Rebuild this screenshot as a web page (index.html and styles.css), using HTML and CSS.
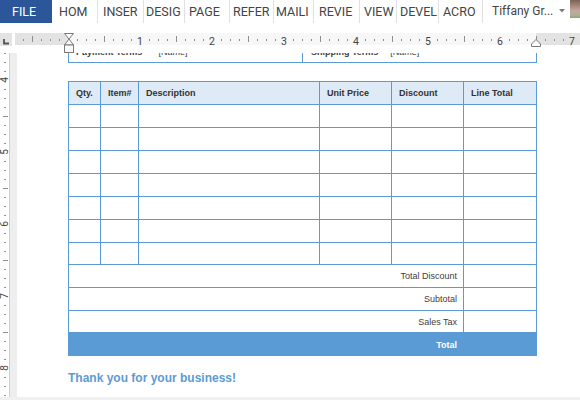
FILE: index.html
```html
<!DOCTYPE html>
<html>
<head>
<meta charset="utf-8">
<link rel="stylesheet" href="styles.css">
</head>
<body>
<div class="app">
  <div class="ribbon">
    <div class="tab file">FILE</div>
    <div class="tab t-hom">HOM</div>
    <div class="tab t-ins">INSER</div>
    <div class="tab t-des">DESIG</div>
    <div class="tab t-pag">PAGE</div>
    <div class="tab t-ref">REFER</div>
    <div class="tab t-mai">MAILI</div>
    <div class="tab t-rev">REVIE</div>
    <div class="tab t-vie">VIEW</div>
    <div class="tab t-dev">DEVEL</div>
    <div class="tab t-acr">ACRO</div>
    <div class="user">
      <span class="uname">Tiffany Gr...</span>
      <svg class="caret" width="6" height="4" viewBox="0 0 6 4"><path d="M0 0H6L3 3.5Z" fill="#7a7a7a"/></svg>
      <span class="avatar"></span>
    </div>
  </div>

  <div class="ruler-row">
    <div class="tabsel">
      <svg width="12" height="13" viewBox="0 0 12 13"><path d="M4 6V10.5H9" fill="none" stroke="#555" stroke-width="1.8"/></svg>
    </div>
    <svg class="hruler" width="565" height="20" viewBox="0 0 565 20">
      <defs>
        <pattern id="htk" x="53" y="0" width="72" height="12" patternUnits="userSpaceOnUse">
          <rect x="9" y="6" width="1" height="2" fill="#8f8f8f"/>
          <rect x="18" y="6" width="1" height="2" fill="#8f8f8f"/>
          <rect x="27" y="6" width="1" height="2" fill="#8f8f8f"/>
          <rect x="36" y="3" width="1" height="6" fill="#8f8f8f"/>
          <rect x="45" y="6" width="1" height="2" fill="#8f8f8f"/>
          <rect x="54" y="6" width="1" height="2" fill="#8f8f8f"/>
          <rect x="63" y="6" width="1" height="2" fill="#8f8f8f"/>
        </pattern>
      </defs>
      <rect x="0" y="0" width="565" height="12" fill="#e3e3e3"/>
      <rect x="53" y="0" width="468" height="12" fill="#f7f7f7"/>
      <rect x="0" y="0" width="565" height="12" fill="url(#htk)"/>
      <g class="rnum">
        <text x="125" y="11.5">1</text>
        <text x="197" y="11.5">2</text>
        <text x="269" y="11.5">3</text>
        <text x="341" y="11.5">4</text>
        <text x="413" y="11.5">5</text>
        <text x="485" y="11.5">6</text>
        <text x="557" y="11.5">7</text>
      </g>
      <g fill="#fbfbfb" stroke="#7a7a7a" stroke-width="1">
        <polygon points="49.5,0.5 58.5,0.5 54,6"/>
        <polygon points="54,6 58.5,12 49.5,12"/>
        <rect x="49.5" y="12" width="9" height="7.5"/>
        <polygon points="521,6.5 525.5,11 525.5,13.5 516.5,13.5 516.5,11"/>
      </g>
    </svg>
  </div>

  <div class="view">
    <svg class="vruler" width="9" height="344" viewBox="0 0 9 344">
      <defs>
        <pattern id="vtk" x="0" y="27" width="9" height="72" patternUnits="userSpaceOnUse">
          <rect x="4" y="9" width="2" height="1" fill="#8f8f8f"/>
          <rect x="4" y="18" width="2" height="1" fill="#8f8f8f"/>
          <rect x="4" y="27" width="2" height="1" fill="#8f8f8f"/>
          <rect x="3" y="36" width="5" height="1" fill="#8f8f8f"/>
          <rect x="4" y="45" width="2" height="1" fill="#8f8f8f"/>
          <rect x="4" y="54" width="2" height="1" fill="#8f8f8f"/>
          <rect x="4" y="63" width="2" height="1" fill="#8f8f8f"/>
        </pattern>
      </defs>
      <rect x="0" y="0" width="9" height="344" fill="url(#vtk)"/>
      <g class="vnum">
        <text transform="translate(4.5 27) rotate(-90)">4</text>
        <text transform="translate(4.5 99) rotate(-90)">5</text>
        <text transform="translate(4.5 171) rotate(-90)">6</text>
        <text transform="translate(4.5 243) rotate(-90)">7</text>
        <text transform="translate(4.5 315) rotate(-90)">8</text>
      </g>
    </svg>
    <div class="gutter"></div>
    <div class="page">
      <div class="prev">
        <div class="pcell pc-left"><b>Payment Terms</b><span class="pname n1">[Name]</span></div>
        <div class="pcell pc-right"><b>Shipping Terms</b><span class="pname n2">[Name]</span></div>
      </div>

      <div class="items">
        <div class="c hd">Qty.</div>
        <div class="c hd">Item#</div>
        <div class="c hd">Description</div>
        <div class="c hd">Unit Price</div>
        <div class="c hd">Discount</div>
        <div class="c hd">Line Total</div>

        <div class="c"></div><div class="c"></div><div class="c"></div><div class="c"></div><div class="c"></div><div class="c"></div>
        <div class="c"></div><div class="c"></div><div class="c"></div><div class="c"></div><div class="c"></div><div class="c"></div>
        <div class="c"></div><div class="c"></div><div class="c"></div><div class="c"></div><div class="c"></div><div class="c"></div>
        <div class="c"></div><div class="c"></div><div class="c"></div><div class="c"></div><div class="c"></div><div class="c"></div>
        <div class="c"></div><div class="c"></div><div class="c"></div><div class="c"></div><div class="c"></div><div class="c"></div>
        <div class="c"></div><div class="c"></div><div class="c"></div><div class="c"></div><div class="c"></div><div class="c"></div>
        <div class="c"></div><div class="c"></div><div class="c"></div><div class="c"></div><div class="c"></div><div class="c"></div>

        <div class="c lbl">Total Discount</div><div class="c"></div>
        <div class="c lbl">Subtotal</div><div class="c"></div>
        <div class="c lbl">Sales Tax</div><div class="c"></div>
        <div class="c lbl tot">Total</div><div class="c tot"></div>
      </div>

      <p class="thanks">Thank you for your business!</p>
    </div>
  </div>
  <div class="hbar"></div>
</div>
</body>
</html>
```

FILE: styles.css
```css
* { box-sizing: border-box; }

html, body {
  margin: 0;
  padding: 0;
  background: #ffffff;
}

.app {
  width: 580px;
  height: 400px;
  overflow: hidden;
  display: flex;
  flex-direction: column;
  font-family: Roboto, "Noto Sans", sans-serif;
}

/* ---------- ribbon tabs ---------- */
.ribbon {
  height: 33px;
  flex: none;
  display: flex;
  align-items: flex-start;
  background: #ffffff;
}

.tab {
  height: 23px;
  line-height: 23px;
  font-size: 12.5px;
  color: #444444;
  white-space: nowrap;
  overflow: hidden;
  border-right: 1px solid #e1e1e1;
  flex: none;
}

.file {
  width: 52px;
  padding-left: 12px;
  background: #2b579a;
  color: #ffffff;
  border-right: none;
}

.t-hom { width: 46px; padding-left: 7px; }
.t-ins { width: 46px; padding-left: 5px; }
.t-des { width: 41px; padding-left: 2px; }
.t-pag { width: 45px; padding-left: 4px; }
.t-ref { width: 44px; padding-left: 3px; }
.t-mai { width: 40px; padding-left: 2px; }
.t-rev { width: 46px; padding-left: 5px; }
.t-vie { width: 37px; padding-left: 4px; }
.t-dev { width: 42px; padding-left: 3px; }
.t-acr { width: 44px; padding-left: 4px; }

.user {
  flex: 1;
  height: 23px;
  display: flex;
  align-items: flex-start;
  padding-left: 9px;
}

.uname {
  line-height: 23px;
  font-size: 12px;
  color: #444444;
  white-space: nowrap;
  width: 65px;
}

.caret {
  margin-top: 9px;
  margin-left: 2px;
}

.avatar {
  margin-left: 5px;
  width: 12px;
  height: 18px;
  background: linear-gradient(180deg, #7b6256 0%, #a88a7c 35%, #c9a6a2 60%, #a8b48e 85%, #8fa07e 100%);
}

/* ---------- horizontal ruler ---------- */
.ruler-row {
  height: 20px;
  flex: none;
  display: flex;
  align-items: flex-start;
}

.tabsel {
  width: 12px;
  height: 13px;
  margin-right: 3px;
  background: #e3e3e3;
}

.tabsel svg { display: block; }

.hruler { display: block; }

.rnum text {
  font-family: Roboto, "Noto Sans", sans-serif;
  font-size: 10.5px;
  fill: #444444;
  text-anchor: middle;
}

/* ---------- document view ---------- */
.view {
  height: 344px;
  flex: none;
  display: flex;
}

.vruler {
  display: block;
  flex: none;
  background: #ffffff;
}

.vnum text {
  font-family: Roboto, "Noto Sans", sans-serif;
  font-size: 10px;
  fill: #444444;
  text-anchor: middle;
  dominant-baseline: central;
}

.gutter {
  width: 8px;
  flex: none;
  border-left: 1px solid #cfcfcf;
  background: #eeeeee;
}

.page {
  flex: 1;
  background: #ffffff;
  overflow: hidden;
  padding-left: 51px;
  font-family: "Liberation Sans", Arial, sans-serif;
}

.prev {
  width: 469px;
  height: 18px;
  margin-top: -8px;
  display: flex;
  border: 1px solid #5b9bd5;
  border-top: none;
}

.pcell {
  width: 233px;
  flex: none;
  font-size: 9px;
  line-height: 11px;
  padding-top: 2px;
  color: #404040;
  white-space: nowrap;
}

.pc-left {
  padding-left: 7px;
  border-right: 1px solid #5b9bd5;
  width: 234px;
}

.pc-right { padding-left: 8px; }

.pname { margin-left: 16px; }
.pname.n2 { margin-left: 12px; }

/* ---------- items table ---------- */
.items {
  margin-top: 18px;
  width: 469px;
  display: grid;
  grid-template-columns: 32px 38px 181px 72px 72px 73px;
  grid-template-rows: repeat(7, 23px) 22px 23px 23px 22px 23px;
  border-left: 1px solid #5b9bd5;
  border-top: 1px solid #5b9bd5;
  font-size: 9px;
  color: #404040;
}

.c {
  border-right: 1px solid #5b9bd5;
  border-bottom: 1px solid #5b9bd5;
  display: flex;
  align-items: center;
  white-space: nowrap;
}

.hd {
  background: #deeaf6;
  font-weight: bold;
  color: #333333;
  padding-left: 7px;
}

.lbl {
  grid-column: 1 / 6;
  justify-content: flex-end;
  padding-right: 6px;
}

.tot {
  background: #5b9bd5;
  color: #ffffff;
  font-weight: bold;
  border-bottom: none;
}

.thanks {
  margin: 15px 0 0 0;
  font-size: 12px;
  line-height: 14px;
  font-weight: bold;
  color: #5b9bd5;
}

.hbar {
  height: 3px;
  flex: none;
  background: #f0f0f0;
}
```
